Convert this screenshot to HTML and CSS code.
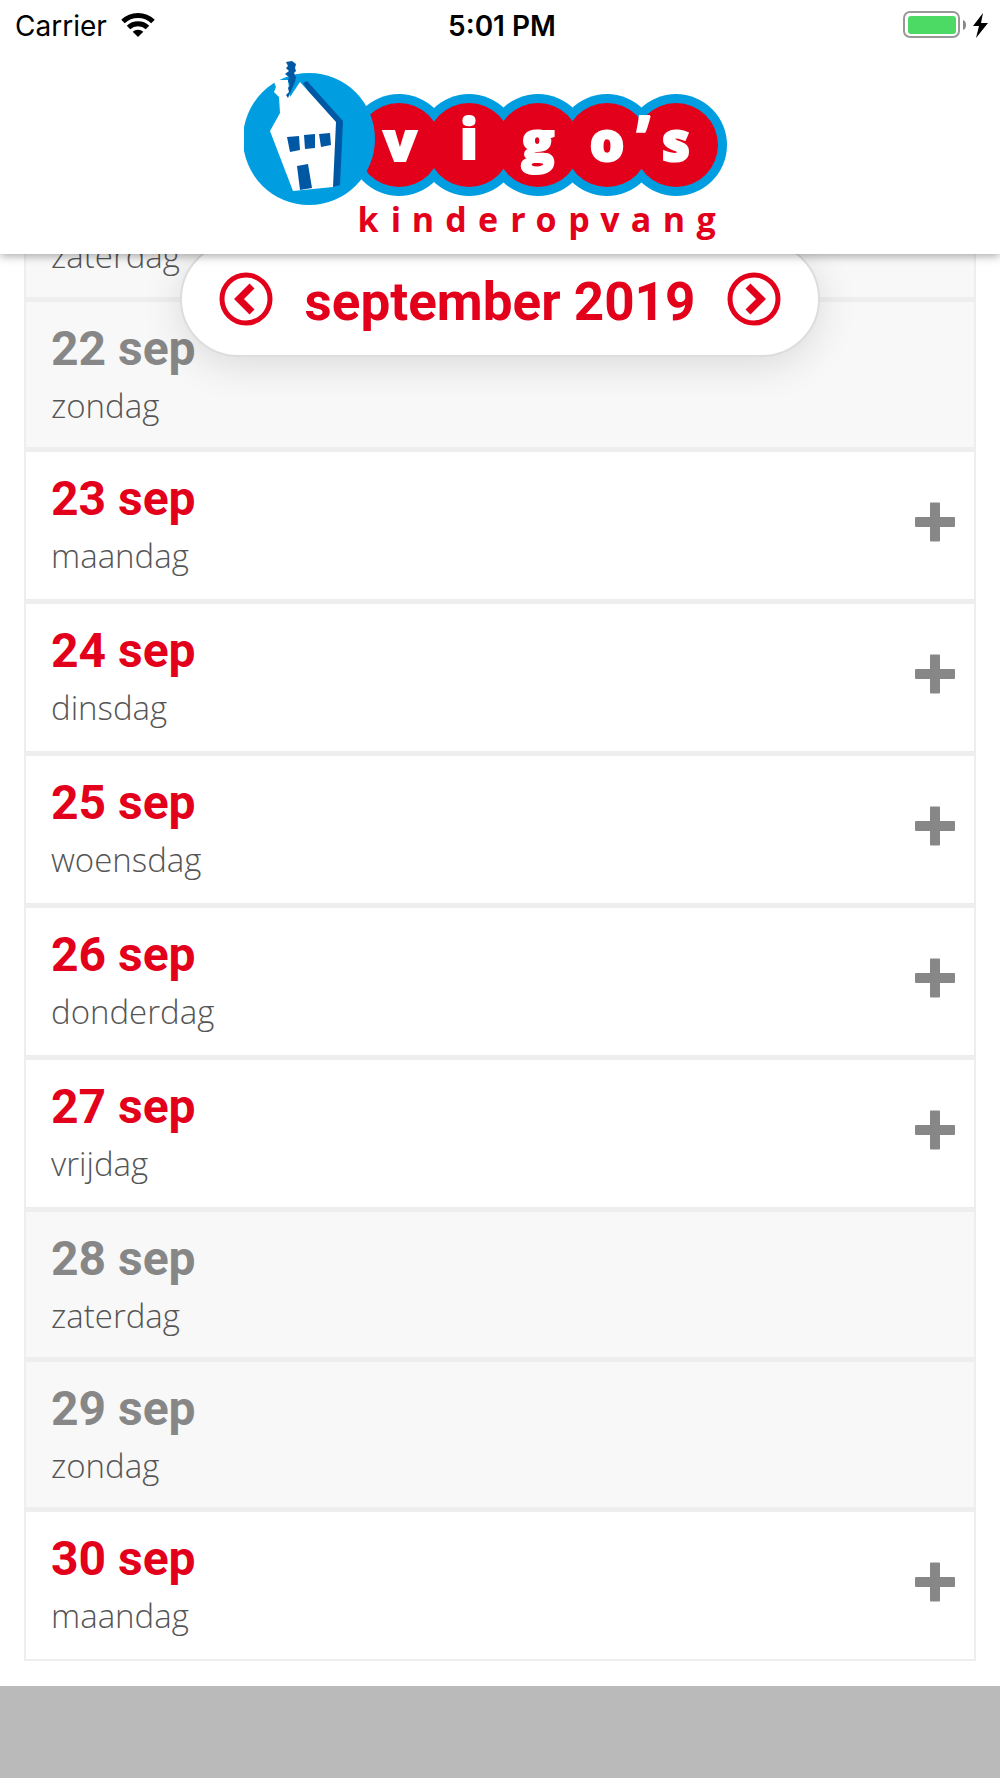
FILE: index.html
```html
<!DOCTYPE html>
<html lang="nl">
<head>
<meta charset="utf-8">
<meta name="viewport" content="width=device-width, initial-scale=1">
<title>Vigo's kinderopvang</title>
<link rel="stylesheet" href="styles.css">
</head>
<body>
<svg class="symbols" aria-hidden="true">
  <symbol id="plus" viewBox="0 0 40 40"><path d="M16 .5h8q1 0 1 1V15h14q1 0 1 1v8q0 1-1 1H25v13.500q0 1-1 1h-8q-1 0-1-1V25H1q-1 0-1-1v-8q0-1 1-1h14V1.500q0-1 1-1z"/></symbol>
</svg>
<header class="header">
  <div class="status">
    <div class="status-left">
      <span>Carrier</span>
      <svg class="wifi" viewBox="0 0 34 25" aria-hidden="true">
        <g fill="none" stroke="#000" stroke-width="5"><path d="M2 9.500a21.500 21.500 0 0 1 30 0"/><path d="M7.500 15.500a13.800 13.800 0 0 1 19 0"/></g>
        <path d="M17 25l-5.300-5.200a7.600 7.600 0 0 1 10.600 0z"/>
      </svg>
    </div>
    <span class="clock">5:01 PM</span>
    <div class="status-right">
      <svg class="battery" viewBox="0 0 86 28" aria-hidden="true">
        <rect x="1" y="1" width="55" height="25" rx="6" fill="none" stroke="#999" stroke-width="2"/>
        <rect x="5" y="5" width="48" height="18" rx="3" fill="#4cd964"/>
        <path d="M60 9q3 1 3 5t-3 5z" fill="#888"/>
        <path d="M80 2L70 15h6l-3 12 12-15h-7z"/>
      </svg>
    </div>
  </div>
  <svg class="logo" viewBox="244 55 512 190" role="img" aria-label="Vigo's kinderopvang">
    <g fill="#009ee0">
      <circle cx="399" cy="145" r="51"/><circle cx="469" cy="145" r="51"/><circle cx="538" cy="145" r="51"/><circle cx="607" cy="145" r="51"/><circle cx="676" cy="145" r="51"/>
    </g>
    <g fill="#e3001b">
      <circle cx="399" cy="145" r="42"/><circle cx="469" cy="145" r="42"/><circle cx="538" cy="145" r="42"/><circle cx="607" cy="145" r="42"/><circle cx="676" cy="145" r="42"/>
    </g>
    <circle cx="309" cy="139" r="66" fill="#009ee0"/>
    <path fill="#0058a5" d="M303 83l4-2 36 40-3 64-7 2-4-63z"/>
    <path fill="#fff" d="M300 82l36 40-3 65-40 4-23-60 10-18-1-16-5-5 2-5-2-5 5-2 9 0 2 17z"/>
    <path fill="#0058a5" d="M286 62l6-1 4 3-1 4 1 3-2 2 2 4-1 5-4 9-3 7-2-3 3-3-1-4 2-3-2-4 1-4-4-3 4-3-3-3 2-2z"/>
    <path fill="#0058a5" d="M287 137l12-1 1 14-10 2zM304 135l11-1v14l-10 1zM319 134l11-1 1 12-10 2zM297 166l11-2 4 24-12 2z"/>
    <g class="logo-name">
      <text x="400" y="161">v</text><text x="469" y="159">i</text><text x="538" y="161">g</text><text x="607" y="161">o</text><text x="643" y="155">’</text><text x="676" y="161">s</text>
    </g>
    <text class="logo-sub" y="232" x="368 396 423 456 488 518 546 579 610 641 674 706">kinderopvang</text>
  </svg>
</header>
<main class="content">
  <nav class="month" aria-label="Maand">
    <button class="month-button" type="button" aria-label="Vorige maand"><svg viewBox="0 0 54 54"><circle cx="27" cy="27" r="24"/><path d="M33 14L20 27l13 13"/></svg></button>
    <h1 class="month-title">september 2019</h1>
    <button class="month-button" type="button" aria-label="Volgende maand"><svg viewBox="0 0 54 54"><circle cx="27" cy="27" r="24"/><path d="M21 14l13 13-13 13"/></svg></button>
  </nav>
  <ul class="days">
    <li class="day weekend partial"><div class="label"><span class="name">zaterdag</span></div></li>
    <li class="day weekend"><div class="label"><span class="date">22 sep</span><span class="name">zondag</span></div></li>
    <li class="day"><div class="label"><span class="date">23 sep</span><span class="name">maandag</span></div><button class="add" type="button" aria-label="Toevoegen"><svg><use href="#plus"/></svg></button></li>
    <li class="day"><div class="label"><span class="date">24 sep</span><span class="name">dinsdag</span></div><button class="add" type="button" aria-label="Toevoegen"><svg><use href="#plus"/></svg></button></li>
    <li class="day"><div class="label"><span class="date">25 sep</span><span class="name">woensdag</span></div><button class="add" type="button" aria-label="Toevoegen"><svg><use href="#plus"/></svg></button></li>
    <li class="day"><div class="label"><span class="date">26 sep</span><span class="name">donderdag</span></div><button class="add" type="button" aria-label="Toevoegen"><svg><use href="#plus"/></svg></button></li>
    <li class="day"><div class="label"><span class="date">27 sep</span><span class="name">vrijdag</span></div><button class="add" type="button" aria-label="Toevoegen"><svg><use href="#plus"/></svg></button></li>
    <li class="day weekend"><div class="label"><span class="date">28 sep</span><span class="name">zaterdag</span></div></li>
    <li class="day weekend"><div class="label"><span class="date">29 sep</span><span class="name">zondag</span></div></li>
    <li class="day"><div class="label"><span class="date">30 sep</span><span class="name">maandag</span></div><button class="add" type="button" aria-label="Toevoegen"><svg><use href="#plus"/></svg></button></li>
  </ul>
</main>
</body>
</html>
```
FILE: styles.css
```css
* { box-sizing: border-box; }

body {
  margin: 0;
  background: #bababa;
  font-family: "Open Sans", sans-serif;
  color: #555;
}

button {
  padding: 0;
  border: 0;
  background: none;
  cursor: pointer;
}

svg { display: block; }

.symbols {
  position: absolute;
  width: 0;
  height: 0;
}

.header {
  position: relative;
  z-index: 2;
  padding-bottom: 9px;
  background: #fff;
  box-shadow: 0 2px 9px rgba(0, 0, 0, .35);
}

.status {
  display: grid;
  grid-template-columns: 1fr auto 1fr;
  align-items: center;
  height: 52px;
  padding: 0 11px 0 15px;
  color: #000;
  font-family: Inter, sans-serif;
  font-size: 28px;
}

.status-left {
  display: flex;
  align-items: center;
  gap: 14px;
}

.wifi {
  width: 34px;
  height: 25px;
  margin-bottom: 3px;
}

.clock {
  font-size: 28px;
  font-weight: 600;
}

.status-right {
  display: flex;
  justify-content: flex-end;
}

.battery {
  width: 86px;
  height: 28px;
  margin-bottom: 3px;
}

.logo {
  width: 512px;
  height: 190px;
  margin: 3px auto 0;
}

.logo-name {
  fill: #fff;
  stroke: #fff;
  stroke-width: 2px;
  font-size: 55px;
  font-weight: 800;
  text-anchor: middle;
}

.logo-sub {
  fill: #e3001b;
  font-size: 34px;
  font-weight: 700;
  text-anchor: middle;
}

.content {
  position: relative;
  display: flow-root;
  padding: 0 24px 25px;
  background: #fff;
  box-shadow: 0 0 36px rgba(0, 0, 0, .2);
}

.month {
  position: absolute;
  z-index: 1;
  top: -13px;
  left: 18%;
  display: flex;
  align-items: center;
  justify-content: space-between;
  width: 64%;
  height: 116px;
  padding: 0 37px;
  border: 2px solid #ddd;
  border-radius: 58px;
  background: #fff;
  box-shadow: 0 8px 40px rgba(0, 0, 0, .12);
}

.month-button svg {
  width: 54px;
  height: 54px;
  fill: none;
  stroke: #e3001b;
  stroke-width: 5px;
}

.month-button path { stroke-width: 7px; }

.month-title {
  margin: 0;
  padding-top: 6px;
  color: #e3001b;
  font-family: Roboto, sans-serif;
  font-size: 53px;
  font-weight: 700;
  line-height: 64px;
}

.days {
  margin: 0;
  padding: 0;
  border: solid #eee;
  border-width: 0 2px 2px;
  list-style: none;
}

.day {
  display: flex;
  align-items: center;
  justify-content: space-between;
  padding: 19px 19px 21px 25px;
  border-top: 5px solid #eee;
}

.label {
  display: flex;
  flex-direction: column;
  gap: 7px;
}

.date {
  color: #e3001b;
  font-family: Roboto, sans-serif;
  font-size: 48px;
  font-weight: 700;
  line-height: 56px;
}

.name {
  font-size: 33px;
  font-weight: 300;
  line-height: 44px;
}

.weekend {
  padding-bottom: 19px;
  background: #f8f8f8;
}

.weekend .date { color: #878787; }

.partial {
  margin-top: -20px;
  padding-top: 0;
  border-top: 0;
}

.add { margin-bottom: 5px; }

.add svg {
  width: 40px;
  height: 40px;
  fill: #878787;
}
```
